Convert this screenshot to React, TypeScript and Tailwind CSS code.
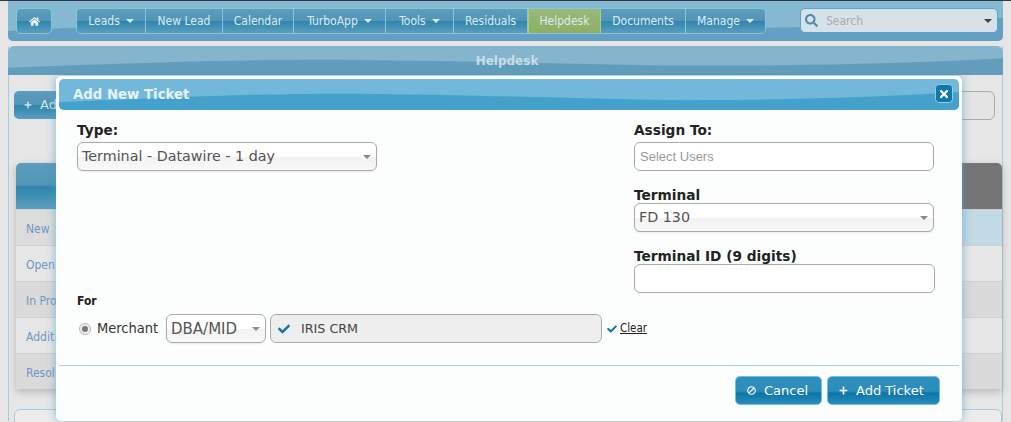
import { FaBan, FaCheck, FaHome, FaPlus, FaSearch, FaTimes } from "react-icons/fa";

const navItems = [
  { label: "Leads", width: "w-[69px]", caret: true },
  { label: "New Lead", width: "w-[77px]" },
  { label: "Calendar", width: "w-[71px]" },
  { label: "TurboApp", width: "w-[92px]", caret: true },
  { label: "Tools", width: "w-[68px]", caret: true },
  { label: "Residuals", width: "w-[74px]" },
  { label: "Helpdesk", width: "w-[73px]", active: true },
  { label: "Documents", width: "w-[85px]" },
  { label: "Manage", width: "w-[79px]", caret: true },
];

// only the part of each label that shows beside the modal
const rows = [
  { label: "New", left: "bg-[#dcdcdc]", right: "bg-[#c2d9e6]" },
  { label: "Open", left: "bg-[#e6e6e6]", right: "bg-[#e6e6e6]" },
  { label: "In Pro", left: "bg-[#dadada]", right: "bg-[#dadada]" },
  { label: "Addit", left: "bg-[#e6e6e6]", right: "bg-[#e6e6e6]" },
  { label: "Resol", left: "bg-[#dadada]", right: "bg-[#dadada]" },
];

const btnGradient =
  "bg-[linear-gradient(180deg,#5c9dbd_0%,#5295b6_48%,#2f85ad_52%,#5c9ec0_100%)]";

const actionBtn =
  "flex h-[29px] items-center gap-[8px] rounded-[5px] border border-[#6fc0e2] pl-[11px] bg-[linear-gradient(180deg,#2f90be_0%,#2c8dbb_52%,#0b75a8_60%,#2a8dbb_100%)]";

function Wave({ fill }: { fill: string }) {
  return (
    <svg
      className="absolute inset-0 h-full w-full"
      viewBox="0 0 1000 100"
      preserveAspectRatio="none"
    >
      <path d="M0 75 C150 55 250 45 350 48 C500 52 620 70 720 68 C820 66 920 58 1000 42 L1000 100 L0 100 Z" fill={fill} />
    </svg>
  );
}

function Caret({ className }: { className: string }) {
  return <span className={`inline-block h-0 w-0 border-x-[4px] border-t-[4px] border-x-transparent ${className}`} />;
}

function Select({ value, width, textSize }: { value: string; width: string; textSize: string }) {
  return (
    <div
      className={`flex h-[29px] ${width} items-center justify-between rounded-[6px] border border-[#aaaaaa] bg-[linear-gradient(180deg,#ffffff_0%,#ffffff_50%,#f2f2f2_54%,#f9f9f9_100%)] pl-[4px] pr-[5px] ${textSize} text-[#555555] shadow-[0_1px_2px_rgba(0,0,0,0.08)]`}
    >
      <span className="pt-[1px]">{value}</span>
      <Caret className="border-t-[#8a8a8a]" />
    </div>
  );
}

function Label({ children, className = "" }: { children: React.ReactNode; className?: string }) {
  return <div className={`text-[13.7px] font-bold text-[#222222] ${className}`}>{children}</div>;
}

export default function App() {
  return (
    <div className="h-[422px] w-[1011px] overflow-hidden border-t border-[#343b46] bg-[#e6e6e6] font-['DejaVu_Sans',sans-serif]">
      <div className="relative h-[421px] px-[8px]">
        {/* Top nav */}
        <div className="relative h-[40px] rounded-b-[5px] bg-[#84b9d1]">
          <div className="absolute inset-0 overflow-hidden rounded-b-[5px]">
            <Wave fill="#659fc2" />
          </div>
          <div className="relative flex items-start pt-[7px] pl-[8px] font-['DejaVu_Sans_Condensed','DejaVu_Sans',sans-serif] text-[12px] text-[#dcebf2]">
            <div className={`flex h-[26px] w-[36px] items-center justify-center rounded-[5px] border border-[#88c6dc] ${btnGradient}`}>
              <FaHome className="text-[11px] text-[#e8f2f6]" />
            </div>
            <div className="ml-[24px] flex h-[26px] overflow-hidden rounded-[5px] border border-[#88c6dc]">
              {navItems.map((item) => (
                <div
                  key={item.label}
                  className={`flex ${item.width} items-center justify-center gap-[6px] border-r border-[#88c6dc] last:border-r-0 ${
                    item.active
                      ? "border-l border-l-[#a8cf7e] border-r-[#a8cf7e] bg-[linear-gradient(180deg,#9ab97a_0%,#8bb065_100%)]"
                      : btnGradient
                  }`}
                >
                  {item.label}
                  {item.caret && <Caret className="border-t-[#dcebf2]" />}
                </div>
              ))}
            </div>
            <div className="ml-[34px] flex h-[25px] w-[198px] items-center rounded-[5px] border border-[#57a7cb] bg-[#d8e0e8] pr-[5px] pl-[4px]">
              <FaSearch className="text-[13px] text-[#4b8bab]" />
              <span className="ml-[8px] flex-1 text-[#a6acb3]">Search</span>
              <Caret className="border-t-[#444444]" />
            </div>
          </div>
        </div>

        {/* Page panel */}
        <div className="mt-[5px] h-[375px] border-x border-[#a9cbdd]">
          <div className="relative -mx-px flex h-[29px] items-center justify-center overflow-hidden rounded-t-[6px] bg-[#84b5cd] pl-[3px]">
            <Wave fill="#639dbd" />
            <span className="relative text-[12px] font-bold text-[#c9dce6]">Helpdesk</span>
          </div>

          <div className="flex items-start justify-between pt-[16px] pl-[5px] pr-[7px]">
            <div className={`flex h-[28px] w-[60px] items-center gap-[8px] rounded-[5px] pl-[10px] text-[13px] text-[#d5e4ec] ${btnGradient}`}>
              <FaPlus className="text-[8px]" />
              Add
            </div>
            <div className="h-[29px] w-[120px] rounded-[6px] border border-[#aaaaaa] bg-[#e4e4e4]" />
          </div>

          <div className="mt-[43px] ml-[7px] shadow-[0_3px_8px_rgba(0,0,0,0.2)]">
            <div className="flex h-[46px]">
              <div className={`flex-1 rounded-tl-[5px] ${btnGradient}`} />
              <div className="w-[80px] rounded-tr-[5px] bg-[#757575]" />
            </div>
            {rows.map((row) => (
              <div key={row.label} className="flex h-[36px] border-t border-[#d0d0d0]">
                <div className={`flex-1 ${row.left} pl-[10px] text-[12px] leading-[36px] font-['DejaVu_Sans_Condensed','DejaVu_Sans',sans-serif] text-[#6f96c4]`}>
                  <div className="pt-[1px]">{row.label}</div>
                </div>
                <div className={`w-[80px] ${row.right}`} />
              </div>
            ))}
          </div>

          <div className="mt-[20px] ml-[5px] h-[30px] rounded-[6px] border border-[#a9cbdd] bg-[#ececec]" />
        </div>

        {/* Modal */}
        <div className="absolute top-[75px] left-[56px] h-[345px] w-[906px] rounded-[5px] bg-[#fcfefd] p-[3px] shadow-[0_0_10px_rgba(80,150,190,0.65)]">
          <div className="relative flex h-[31px] items-center overflow-hidden rounded-[5px] bg-[#72b8da] pl-[14px]">
            <Wave fill="#43a1cb" />
            <span className="relative text-[13.3px] font-bold text-[#e6f3f8]">Add New Ticket</span>
            <div className="absolute top-[5px] right-[6px] flex h-[19px] w-[18px] items-center justify-center rounded-[4px] border border-[#8fd0e8] bg-[#0f78a8]">
              <FaTimes className="text-[12px] text-white" />
            </div>
          </div>

          <div className="px-[18px] pt-[12px]">
            <div className="flex justify-between pr-[7px]">
              <div>
                <Label className="mb-[4px] leading-[16px]">Type:</Label>
                <Select value="Terminal - Datawire - 1 day" width="w-[300px]" textSize="text-[14.3px]" />
              </div>
              <div className="w-[300px]">
                <Label className="mb-[4px] leading-[16px]">Assign To:</Label>
                <input
                  placeholder="Select Users"
                  className="h-[29px] w-full rounded-[6px] border border-[#aaaaaa] bg-white px-[5px] font-['Liberation_Sans',sans-serif] text-[13px] placeholder:text-[#999999]"
                />
                <Label className="mt-[17px] leading-[15px]">Terminal</Label>
                <Select value="FD 130" width="w-full" textSize="text-[14.3px]" />
                <Label className="mt-[17px] leading-[15px]">Terminal ID (9 digits)</Label>
                <input className="h-[29px] w-[301px] rounded-[6px] border border-[#aaaaaa] bg-white" />
              </div>
            </div>

            <div className="font-['DejaVu_Sans_Condensed','DejaVu_Sans',sans-serif] text-[12px] leading-[16px] font-bold text-[#222222]">
              For
            </div>
            <div className="mt-[5px] flex items-center">
              <span className="ml-[2px] flex h-[12px] w-[12px] items-center justify-center rounded-full border border-[#bbbbbb] bg-[#eeeeee]">
                <span className="h-[6px] w-[6px] rounded-full bg-[#777777]" />
              </span>
              <span className="ml-[6px] w-[69px] pt-[1px] font-['DejaVu_Sans_Condensed','DejaVu_Sans',sans-serif] text-[14.5px] text-[#333333]">
                Merchant
              </span>
              <Select value="DBA/MID" width="w-[100px]" textSize="text-[15px]" />
              <div className="ml-[4px] flex h-[29px] w-[332px] items-center rounded-[6px] border border-[#aaaaaa] bg-[#eeeeee] pl-[7px] text-[12.7px] text-[#444444]">
                <FaCheck className="text-[12px] text-[#0f72ab]" />
                <span className="ml-[11px] pt-[1px]">IRIS CRM</span>
              </div>
              <FaCheck className="ml-[5px] text-[10px] text-[#0f72ab]" />
              <span className="ml-[3px] pt-[1px] font-['DejaVu_Sans_Condensed','DejaVu_Sans',sans-serif] text-[11.5px] text-[#222222] underline">
                Clear
              </span>
            </div>
          </div>

          <div className="mt-[22px] border-t border-[#aecbdc]" />

          <div className="flex justify-end gap-[5px] pt-[10px] pr-[19px] text-[13px] text-white">
            <div className={`${actionBtn} w-[87px]`}>
              <FaBan className="-scale-x-100 text-[9px]" />
              Cancel
            </div>
            <div className={`${actionBtn} w-[113px]`}>
              <FaPlus className="text-[9px]" />
              Add Ticket
            </div>
          </div>
        </div>
      </div>
    </div>
  );
}
